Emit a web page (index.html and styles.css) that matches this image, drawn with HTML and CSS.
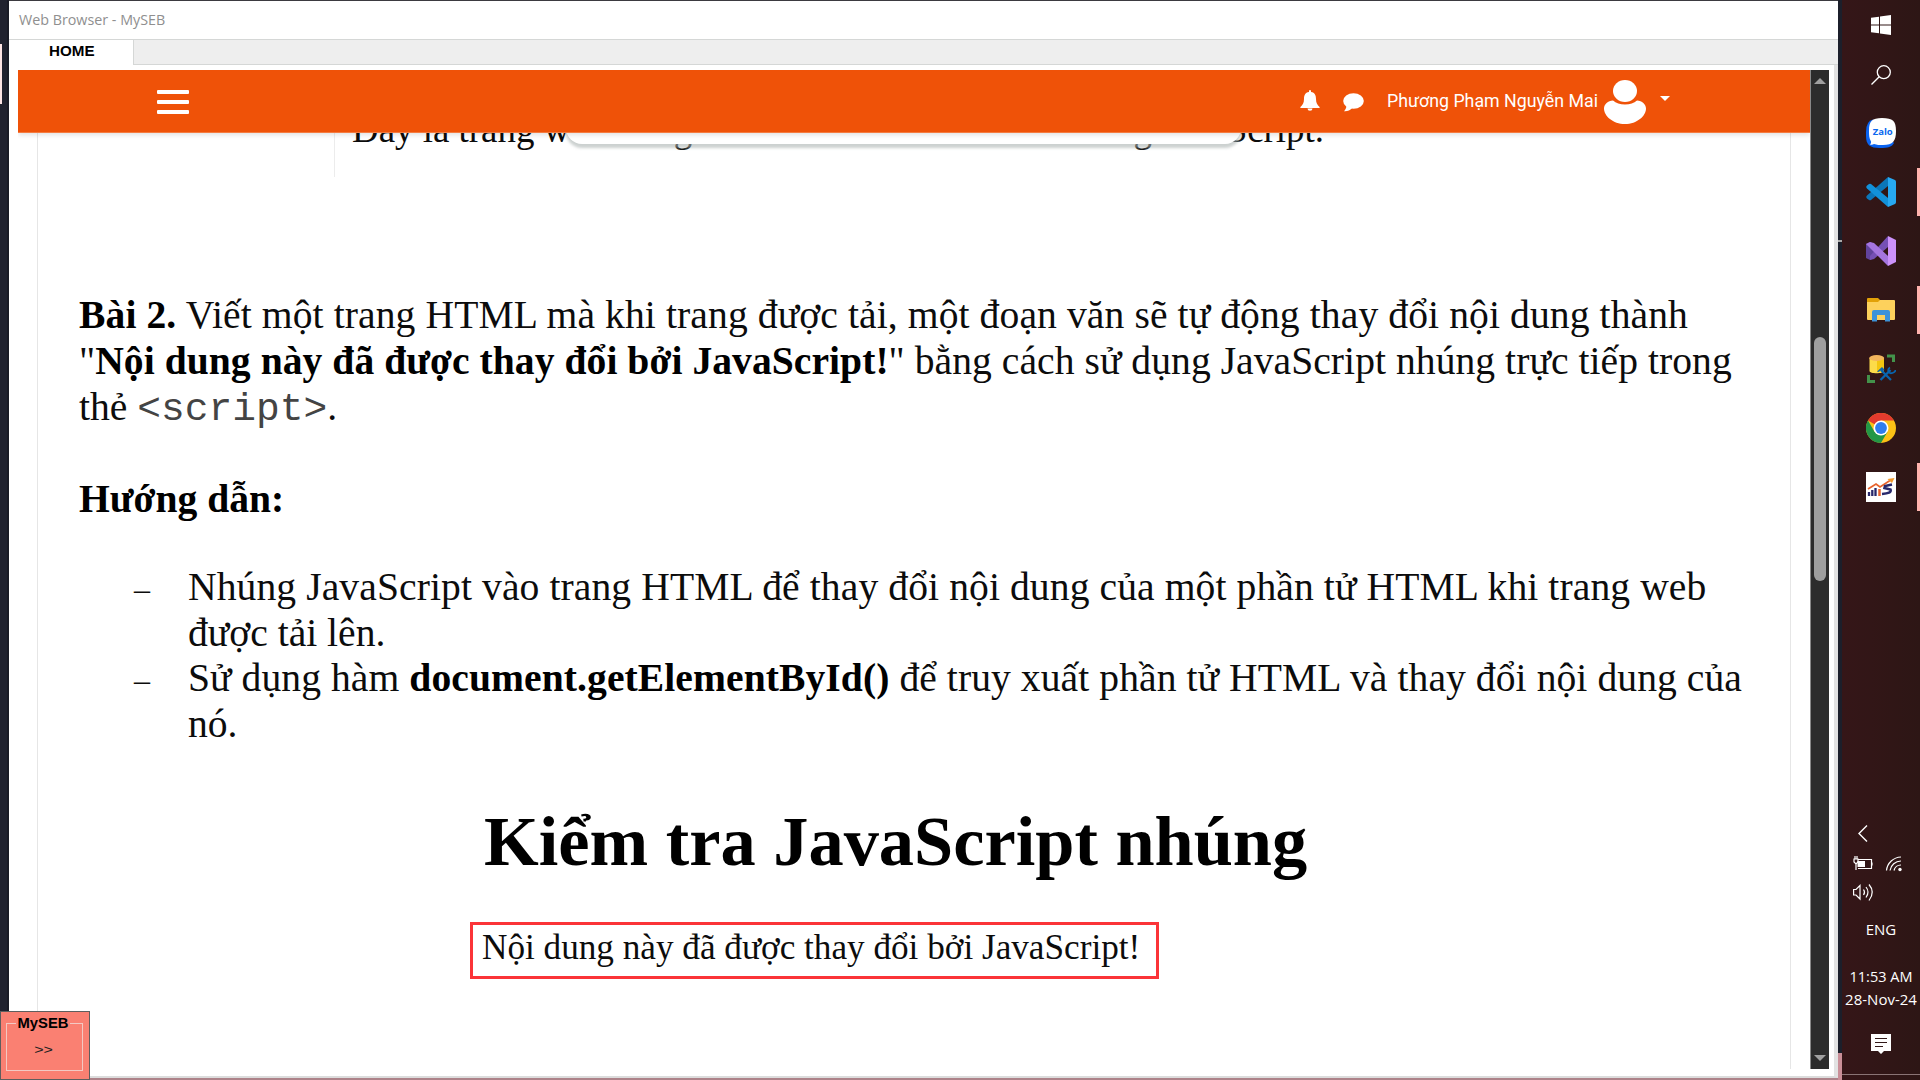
FILE: index.html
```html
<!DOCTYPE html>
<html lang="vi">
<head>
<meta charset="utf-8">
<title>Web Browser - MySEB</title>
<link rel="stylesheet" href="styles.css">
</head>
<body>
<div class="desktop">
  <div class="left-edge"><i class="edge-mark"></i></div>
  <main class="window">
    <div class="titlebar">Web Browser - MySEB</div>
    <div class="tabs"><div class="tab">HOME</div></div>
    <div class="frame">
      <section class="page">
        <header class="header">
          <svg class="burger" viewBox="0 0 32 24"><g fill="#fff"><rect width="32" height="4" rx="1"/><rect y="10" width="32" height="4" rx="1"/><rect y="20" width="32" height="4" rx="1"/></g></svg>
          <div class="user">
            <svg class="bell" viewBox="0 0 20 21" fill="#fff"><path d="M9 1a1 1 0 0 1 2 0v1c4 .6 5 3.500 5 7 0 4 1.400 6 3.600 8v1H.4v-1C2.600 15 4 13 4 9c0-3.500 1-6.400 5-7zM7.500 18.500h5a2.500 2.300 0 0 1-5 0z"/></svg>
            <svg class="chat" viewBox="0 0 21 19" fill="#fff"><ellipse cx="10.500" cy="8" rx="10.300" ry="7.800"/><path d="M3.500 12c0 3-1 4.500-2.500 6.200 3.500.3 6-1 8-3z"/></svg>
            <span class="name">Phương Phạm Nguyễn Mai</span>
            <svg class="avatar" viewBox="0 0 42 44" fill="#fff"><ellipse cx="21" cy="11" rx="12" ry="11"/><path d="M9 20.500c3 2.800 7 4 12 4s9-1.200 12-4c5 .3 9 4 9 8C42 36 33 44 21 44S0 36 0 28.500c0-4 4-7.700 9-8z"/></svg>
            <i class="caret"></i>
          </div>
        </header>
        <div class="pill"></div>
        <article class="doc">
          <div class="cell"><p class="cut"><span>Đây là trang web trong</span><span>nhúng JavaScript.</span></p></div>
          <div class="task">
            <p class="l1"><b>Bài 2.</b> Viết một trang HTML mà khi trang được tải, một đoạn văn sẽ tự động thay đổi nội dung thành</p>
            <p class="l2">"<b>Nội dung này đã được thay đổi bởi JavaScript!</b>" bằng cách sử dụng JavaScript nhúng trực tiếp trong</p>
            <p class="l3">thẻ <code>&lt;script&gt;</code>.</p>
          </div>
          <p class="guide"><b>Hướng dẫn:</b></p>
          <ul class="steps">
            <li><span class="dash">–</span><div><p class="s1">Nhúng JavaScript vào trang HTML để thay đổi nội dung của một phần tử HTML khi trang web</p><p>được tải lên.</p></div></li>
            <li><span class="dash">–</span><div><p class="s2">Sử dụng hàm <b>document.getElementById()</b> để truy xuất phần tử HTML và thay đổi nội dung của</p><p>nó.</p></div></li>
          </ul>
          <h1>Kiểm tra JavaScript nhúng</h1>
          <p class="result">Nội dung này đã được thay đổi bởi JavaScript!</p>
        </article>
      </section>
      <div class="scroll"><i class="up"></i><i class="thumb"></i><i class="down"></i></div>
    </div>
  </main>
  <div class="right-edge"><i class="tick"></i><i class="pink"></i></div>
  <aside class="taskbar">
    <div class="slot"><svg width="20" height="20" viewBox="0 0 20 20" fill="#fff"><path d="M0 2.800 8 1.700V9.500H0zM9 1.500 20 0v9.500H9zM0 10.500h8v7.800L0 17.200zM9 10.500h11V20L9 18.500z"/></svg></div>
    <div class="slot search"><svg width="20" height="20" viewBox="0 0 20 20" fill="none" stroke="#fff" stroke-width="1.300"><circle cx="12.800" cy="7.200" r="6.500"/><path d="M8.200 11.800.5 19.500"/></svg></div>
    <div class="apps">
      <div class="slot"><svg width="30" height="30" viewBox="0 0 30 30"><path d="M7 1.500Q0 3 0 14v4c0 9 4 12 14 12 8 0 12-1 14-5z" fill="#0a63f0"/><path d="M16 0c11 0 14 3 14 13s-3 14-13 14c-4 0-6 0-9-1-1 .8-3 .8-4 .5 1-1 1.200-2 1-3C3 20 3 17 3 13 3 3 6 0 16 0z" fill="#fff"/><text x="16.700" y="17" text-anchor="middle" class="zalo">Zalo</text></svg></div>
      <div class="slot active"><svg width="30" height="30" viewBox="0 0 30 30"><path d="M22 0 1 18.500q-1.500 1.500 0 3L3 23q1 .6 2 0L22 9z" fill="#0b76b9"/><path d="M22 30 1 11.500Q-.5 10 1 8.500L3 7q1-.6 2 0L22 21z" fill="#1291da"/><path d="m22 0 7 3q1 .6 1 2v20q0 1.400-1 2l-7 3z" fill="#27a9f2"/></svg></div>
      <div class="slot"><svg width="30" height="30" viewBox="0 0 30 30"><path d="m0 8 4-2 4 2v14l-4 2-4-2z" fill="#61439c"/><path d="M22 0 4 20v4l4-1L22 11z" fill="#7650b5"/><path d="m4 6 4 1 14 13v10L0 8z" fill="#a575df"/><path d="m22 0 8 4v22l-8 4z" fill="#cc92fa"/></svg></div>
      <div class="slot active"><svg width="28" height="24" viewBox="0 0 28 24"><path d="M0 1q0-1 1-1h10l2 2v4H0z" fill="#e2a108"/><path d="M0 4h11l2-2h14q1 0 1 1v18q0 1-1 1H1q-1 0-1-1z" fill="#fdd15c"/><path d="M5 23.500V14q0-2 2-2h14q2 0 2 2v9.500h-5V17h-8v6.500z" fill="#3c92d8"/></svg></div>
      <div class="slot"><svg width="30" height="30" viewBox="0 0 30 30"><path d="M3.500 4v13c0 3 14 3 14 0V4z" fill="#fcdb4a"/><path d="M11 5h7v13h-7z" fill="#f3c510"/><ellipse cx="10.700" cy="4" rx="7.500" ry="3" fill="#f3b55d"/><path d="M21 2h6.500v6M2.500 21v6.500H9" fill="none" stroke="#43924a" stroke-width="3"/><path d="m14.500 26 10-10M15 16l10 10" fill="none" stroke="#0865ae" stroke-width="2.300"/><path d="m11 17.500 5-4.500 2.500 2.500-2 2.500-2-1.500-2 1.500z" fill="#0865ae"/><path d="M24 13.500q-2.500 1.500-1.500 4t4 1.500 3-3" fill="none" stroke="#0865ae" stroke-width="1.800"/></svg></div>
      <div class="slot"><svg width="30" height="30" viewBox="0 0 30 30"><circle cx="15" cy="15" r="15" fill="#fbc116"/><path d="M15 15 2 7.500A15 15 0 0 1 28 7.500H15z" fill="#e33b2e"/><path d="M2 7.500A15 15 0 0 0 15 30l6.500-11.300L8.500 18.700z" fill="#229746"/><circle cx="15" cy="15" r="7.500" fill="#fff"/><circle cx="15" cy="15" r="5.900" fill="#2f7ded"/></svg></div>
      <div class="slot active"><svg width="30" height="30" viewBox="0 0 30 30"><path d="M0 0h30v30H0z" fill="#fff"/><path d="M3 24v-4M6.300 24v-6M9.500 24v-8" stroke="#28286b" stroke-width="2.300"/><path d="M13.500 24v-7" stroke="#e8622c" stroke-width="2.500"/><path d="m2 17 8-5 4 3L24 8.500" fill="none" stroke="#e8622c" stroke-width="1.700"/><path d="m21.500 7 7-1-2.500 5z" fill="#f39a2c"/><path d="m26 12.500-7 1.500-.5 2 6 1.500c1 3-2 4-8.500 4.500" fill="none" stroke="#28286b" stroke-width="2.600"/></svg></div>
    </div>
    <div class="tray">
      <svg class="chev" width="10" height="17" viewBox="0 0 10 17" fill="none" stroke="#fff" stroke-width="1.400"><path d="M9 .5 1 8.500l8 8"/></svg>
      <svg width="50" height="48" viewBox="0 0 50 48" fill="none" stroke="#fff" stroke-width="1.200"><path d="M5 3.500h13.500v9H5M19 6.500v3M1 3h4v3L3 8 1 6zM2 0v3M4 0v3M3 8v6"/><path d="M4.500 5H12v6H4.500z" fill="#fff" stroke="none"/><path d="M33.500 14.500A15 15 0 0 1 48 1M37 14.500A11 11 0 0 1 48 5M41 14.500A7 7 0 0 1 48 9"/><circle cx="47" cy="13.500" r="1.700" fill="#fff" stroke="none"/><path d="M.6 33.500H3l4-4V43l-4-4H.6zM10.500 33.500q2 2.700 0 5.500M13 31q4 5 0 10.500M16 28.500q6.500 7.500 0 16"/></svg>
    </div>
    <div class="lang">ENG</div>
    <div class="clock"><span class="time">11:53 AM</span><span class="date">28-Nov-24</span></div>
    <svg class="note" width="20" height="20" viewBox="0 0 20 20"><path d="M0 0h20v17h-7l-3 3-3-3H0z" fill="#fff"/><path d="M4 4.500h12M4 8.500h12M4 12.500h8" stroke="#321818" stroke-width="1.200"/></svg>
    <i class="bottom-line"></i>
  </aside>
  <div class="seb"><div class="group"><b class="legend">MySEB</b><span class="more">&gt;&gt;</span></div></div>
</div>
</body>
</html>
```
FILE: styles.css
```css
* { box-sizing: border-box; margin: 0; padding: 0; }
body { width: 1920px; height: 1080px; overflow: hidden; background: #3b3a40; }
svg { display: block; flex: none; }
i { display: block; }
.desktop { position: relative; display: grid; grid-template-columns: 9px 1829px 4px 78px; height: 1080px; }
.left-edge { background: #20222f; padding-top: 44px; border-right: 2px solid #191b26; }
.edge-mark { width: 2px; height: 60px; background: #fde4e4; }

.window { margin-top: 1px; height: 1079px; display: flex; flex-direction: column; background: #fff; border-bottom: 2px solid #ad8289; }
.titlebar { height: 38px; padding-left: 10px; font: 14.3px/38px "Open Sans", sans-serif; color: #8f8f8f; }
.tabs { height: 26px; background: #eee; border-top: 1px solid #d5d7d6; border-bottom: 1px solid #d5d7d6; flex: none; display: flex; }
.tab { width: 125px; height: 25px; background: #fff; border-right: 1px solid #d5d7d6; padding-left: 40px; font: bold 15.2px/22px "Liberation Sans", sans-serif; color: #000; }
.frame { flex: 1; display: flex; padding: 5px 5px 6px 9px; border-right: 4px solid #e2e2e2; border-bottom: 2px solid #dcdcdc; min-height: 0; }
.page { position: relative; width: 1792px; height: 999px; overflow: hidden; }
.header { position: relative; z-index: 2; height: 63px; background: #ef5208; border-bottom: 1px solid #f47b40; box-shadow: 0 2px 5px rgba(0,0,0,.12); display: flex; justify-content: space-between; padding: 0 140px 0 139px; }
.burger { width: 32px; height: 24px; margin-top: 20px; }
.user { display: flex; align-items: flex-start; }
.bell { width: 20px; height: 21px; margin: 20px 23px 0 0; }
.chat { width: 21px; height: 19px; margin: 23px 23px 0 0; }
.name { width: 217px; font: 17.8px/61px Roboto, sans-serif; color: #fff; white-space: nowrap; }
.avatar { width: 42px; height: 44px; margin: 10px 14px 0 0; }
.caret { margin-top: 26px; border: 5px solid transparent; border-top-color: #fff; border-bottom: 0; }
.pill { position: absolute; z-index: 1; left: 548px; top: 40px; width: 675px; height: 34px; border-radius: 0 0 16px 16px; background: #fff; box-shadow: 0 4px 3px rgba(170,178,176,.6); }

.doc { margin: 0 19px; height: 936px; border: 1px solid #e6e6e6; border-width: 0 1px; padding-left: 41px; font: 39.6px/45.8px "Liberation Serif", serif; color: #0c0c0c; }
.doc p { white-space: nowrap; }
.doc b { color: #000; }
.cell { height: 44px; margin-left: 255px; border-left: 1px solid #ececec; padding-left: 17px; display: flex; align-items: flex-end; }
.doc .cut { width: 972px; display: flex; justify-content: space-between; margin-bottom: 24px; font-size: 36.9px; }
.task { margin-top: 116px; }
.l1 { letter-spacing: .1px; }
.l2 { letter-spacing: .05px; }
.s1 { letter-spacing: .095px; }
.s2 { letter-spacing: .075px; }
code { font: 39.6px/40px "Liberation Mono", monospace; color: #444; }
.guide { margin-top: 47px; }
.steps { list-style: none; margin-top: 42px; }
.steps li { display: flex; line-height: 45.6px; }
.dash { width: 109px; padding: 2px 0 0 55px; font-size: 32px; }
h1 { margin: 53px 0 0 405px; font: bold 70.4px/80px "Liberation Serif", serif; color: #000; white-space: nowrap; }
.result { width: 689px; height: 57px; margin: 41px 0 0 391px; border: 3px solid #fb3438; padding-left: 9px; font-size: 35.2px; line-height: 45px; }

.scroll { width: 19px; height: 999px; background: #2c2c2c; border-left: 1px solid #888; display: flex; flex-direction: column; align-items: center; }
.up { margin-top: 8px; border: 6px solid transparent; border-bottom-color: #a0a0a0; border-top: 0; }
.thumb { width: 12px; height: 244px; margin-top: 253px; background: #9f9f9f; border-radius: 6px; }
.down { margin: auto 0 8px; border: 6px solid transparent; border-top-color: #a0a0a0; border-bottom: 0; }

.right-edge { background: #1c1f2b; display: flex; flex-direction: column; padding-top: 240px; }
.tick { height: 2px; background: #aaa; }
.pink { height: 27px; margin-top: auto; background: #ca8f98; }

.taskbar { position: relative; background: linear-gradient(90deg, #351618, #2d1615); color: #fff; display: flex; flex-direction: column; align-items: center; padding-top: 1px; font-family: "Open Sans", sans-serif; }
.slot { width: 78px; height: 48px; flex: none; display: grid; place-items: center; border: 0 solid transparent; border-right: 3px solid transparent; padding-left: 3px; }
.search { margin-top: 2px; }
.active { border-right-color: #ffb3ad; }
.apps { display: flex; flex-direction: column; gap: 11px; margin-top: 10px; }
.zalo { font: bold 9.500px "Open Sans", sans-serif; fill: #0a68ef; }
.tray { width: 56px; margin-top: 314px; }
.chev { margin: 0 0 14px 5px; }
.lang { margin-top: 13px; font-size: 15px; line-height: 24px; }
.clock { margin-top: 25px; display: flex; flex-direction: column; align-items: center; font-size: 15px; line-height: 22px; white-space: nowrap; }
.time { font-size: 14.5px; }
.note { margin-top: 24px; }
.bottom-line { position: absolute; left: 0; right: 0; top: 1074px; height: 1px; background: #8a7475; }

.seb { position: absolute; left: 0; top: 1011px; width: 90px; height: 69px; padding: 11px 6px 9px 5px; background: #fa8072; border: 1px solid #5e5e5e; font: 15px/18px "Liberation Sans", sans-serif; color: #222; }
.group { height: 48px; border: 1px solid #f3c9c3; display: flex; flex-direction: column; align-items: center; }
.legend { margin: -10px 3px 0 0; padding: 0 2px; background: #fa8072; font-size: 14.8px; color: #000; }
.more { margin: 9px 2px 0 0; font-size: 16px; transform: scaleY(.85); }
```
